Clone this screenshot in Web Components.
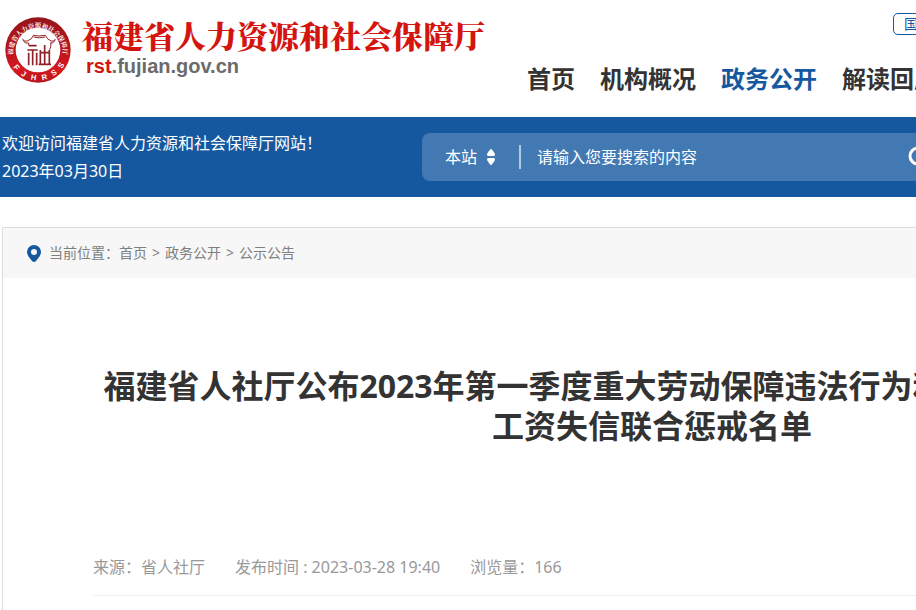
<!DOCTYPE html>
<html lang="zh-CN">
<head>
<meta charset="utf-8">
<title>福建省人力资源和社会保障厅</title>
<style>
  body {
    margin: 0;
    background: #fff;
    color: #333;
    font-family: "Noto Sans", "Noto Sans CJK SC", sans-serif;
    font-size: 16px;
    line-height: 28px;
  }
</style>
</head>
<body>
<site-page>
  <site-header slot="header">
    <nav-item href="#">首页</nav-item>
    <nav-item href="#">机构概况</nav-item>
    <nav-item href="#" active>政务公开</nav-item>
    <nav-item href="#">解读回应</nav-item>
  </site-header>
  <welcome-bar slot="header" date="2023年03月30日">欢迎访问福建省人力资源和社会保障厅网站！</welcome-bar>
  <article-panel>
    <crumb-trail slot="crumbs" items="首页,政务公开,公示公告"></crumb-trail>
    <span slot="title">福建省人社厅公布2023年第一季度重大劳动保障违法行为和第一批拖欠农民工<br>工资失信联合惩戒名单</span>
    <span slot="meta">来源：省人社厅</span>
    <span slot="meta">发布时间 : 2023-03-28 19:40</span>
    <span slot="meta">浏览量：166</span>
  </article-panel>
</site-page>

<script>
class SitePage extends HTMLElement {
  constructor() {
    super();
    this.attachShadow({ mode: "open" });
    this.shadowRoot.innerHTML = `
      <style>
        :host { display: block; overflow: hidden; }
        .wide { min-width: 1304px; }
        main { max-width: 1300px; margin: 30px auto 0; }
      </style>
      <div class="wide">
        <slot name="header"></slot>
        <main><slot></slot></main>
      </div>
    `;
  }
}

class SiteSeal extends HTMLElement {
  constructor() {
    super();
    this.attachShadow({ mode: "open" });
    // letters of the lower ring, with the angle of each one
    const ring = [["F", 51], ["J", 31], ["H", 9], ["R", -13], ["S", -35], ["S", -56]];
    const letters = ring
      .map(([c, a]) => `<text x="99" y="190" text-anchor="middle" transform="rotate(${a} 99 99)">${c}</text>`)
      .join("");
    this.shadowRoot.innerHTML = `
      <style>
        :host { display: block; flex: none; width: 66px; height: 66px; }
        svg { display: block; width: 100%; height: 100%; }
        .top { font: 700 19px "Noto Serif CJK SC", "Noto Sans CJK SC", serif; }
        .low { font: 700 23px "Liberation Sans", sans-serif; }
      </style>
      <svg viewBox="0 0 198 198" aria-hidden="true">
        <defs>
          <linearGradient id="red" x1="0" y1="0" x2="0" y2="1">
            <stop offset="0" stop-color="#96151b"/>
            <stop offset="0.45" stop-color="#b5151a"/>
            <stop offset="0.8" stop-color="#d51920"/>
            <stop offset="1" stop-color="#b5161b"/>
          </linearGradient>
          <path id="arc" d="M24 108A75 75 0 1 1 174 108"/>
        </defs>
        <circle cx="99" cy="99" r="98" fill="url(#red)"/>
        <circle cx="99" cy="99" r="67" fill="#fff"/>
        <g fill="#fff">
          <text class="top" text-anchor="middle"><textPath href="#arc" startOffset="50%">福建省人力资源和社会保障厅</textPath></text>
          <g class="low">${letters}</g>
        </g>
        <g fill="none" stroke="#8f2228" stroke-width="3">
          <path d="M52 65q5 11 15 7q15-5 18-17q15 4 36 0q5 13 18 17q10 3 12-6"/>
          <path d="M54 70q6 12 17 8M86 60q16 5 34 0M150 70q-5 11-15 8M71 78v8M138 78q0 12-4 20"/>
        </g>
        <g fill="none" stroke="#8f2228" stroke-width="5">
          <path d="M72 86h23M67 99h31M83 99v46M71 107v38M95 107v38"/>
          <path d="M106 99v43M133 99v43M119 84v58M101 142h37M106 107h27"/>
        </g>
      </svg>
    `;
  }
}

class NavItem extends HTMLElement {
  constructor() {
    super();
    this.attachShadow({ mode: "open" });
    this.shadowRoot.innerHTML = `
      <style>
        :host { display: block; flex: none; }
        a { color: #333; font-size: 24px; font-weight: 700; line-height: 36px; text-decoration: none; white-space: nowrap; }
        :host([active]) a, a:hover { color: #15589f; }
      </style>
      <a href="${this.getAttribute("href") || "#"}"><slot></slot></a>
    `;
  }
}

class SiteHeader extends HTMLElement {
  constructor() {
    super();
    this.attachShadow({ mode: "open" });
    this.shadowRoot.innerHTML = `
      <style>
        :host { display: block; }
        header { display: flex; min-height: 117px; box-sizing: border-box; padding-left: 5px; }
        .brand { display: flex; flex: none; gap: 11px; width: 522px; padding-top: 17px; box-sizing: border-box; text-decoration: none; }
        .name { color: #d4140f; font-size: 31px; font-weight: 900; line-height: 36px; white-space: nowrap; font-family: "Noto Serif CJK SC", "Noto Sans CJK SC", serif; }
        .domain { color: #6b6b6b; font: 700 20px/26px "Liberation Sans", sans-serif; padding-left: 4px; }
        .domain b { color: #d4140f; }
        .right { flex: 1; padding-top: 13px; }
        .links { display: flex; padding-left: 366px; }
        .links a { border: 1px solid #15589f; border-radius: 5px; color: #15589f; font-size: 14px; line-height: 20px; padding: 0 10px; text-decoration: none; white-space: nowrap; }
        nav { display: flex; gap: 25px; padding-top: 26px; }
      </style>
      <header>
        <a class="brand" href="#">
          <site-seal></site-seal>
          <div>
            <div class="name">福建省人力资源和社会保障厅</div>
            <div class="domain"><b>rst</b>.fujian.gov.cn</div>
          </div>
        </a>
        <div class="right">
          <div class="links"><a href="#">国务院网站</a></div>
          <nav><slot></slot></nav>
        </div>
      </header>
    `;
  }
}

class SearchBox extends HTMLElement {
  constructor() {
    super();
    this.attachShadow({ mode: "open" });
    this.shadowRoot.innerHTML = `
      <style>
        :host { display: block; }
        form { display: flex; align-items: center; height: 48px; border-radius: 8px; background: rgba(255, 255, 255, 0.2); padding-left: 23px; }
        select, input, button { font: inherit; color: #fff; background: none; border: 0; margin: 0; padding: 0; outline: 0; }
        select { appearance: none; width: 34px; height: 28px; }
        option { color: #333; }
        .arrows { width: 10px; height: 18px; margin: 0 23px 0 7px; fill: #fff; }
        .rule { width: 2px; height: 24px; background: #b5cae1; margin-right: 16px; }
        input { flex: 1; min-width: 0; height: 28px; }
        input::placeholder { color: #fff; opacity: 1; }
        button { width: 48px; height: 48px; }
        button svg { display: block; }
      </style>
      <form>
        <select id="scope" aria-label="搜索范围"><option>本站</option></select>
        <svg class="arrows" viewBox="0 0 10 18" aria-hidden="true"><path d="M5 1Q6 1 9 6Q9 8 8 8H2Q1 8 1 6Q4 1 5 1ZM5 17Q4 17 1 12Q1 10 2 10H8Q9 10 9 12Q6 17 5 17Z"/></svg>
        <span class="rule"></span>
        <input id="q" type="text" aria-label="搜索" placeholder="请输入您要搜索的内容">
        <button type="button" aria-label="搜索">
          <svg width="24" height="24" viewBox="0 0 24 24" fill="none" stroke="#fff" stroke-width="3"><circle cx="10" cy="11" r="8"/><path d="M16 17l6 6"/></svg>
        </button>
      </form>
    `;
  }
}

class WelcomeBar extends HTMLElement {
  constructor() {
    super();
    this.attachShadow({ mode: "open" });
    this.shadowRoot.innerHTML = `
      <style>
        :host { display: block; background: #15589f; color: #fff; }
        .row { display: grid; grid-template-columns: 420px minmax(0, 534px); align-items: center; padding: 12px 2px; }
        p { margin: 0; white-space: nowrap; }
      </style>
      <div class="row">
        <div>
          <p><slot></slot></p>
          <p>${this.getAttribute("date") || ""}</p>
        </div>
        <search-box></search-box>
      </div>
    `;
  }
}

class CrumbTrail extends HTMLElement {
  constructor() {
    super();
    this.attachShadow({ mode: "open" });
    const links = (this.getAttribute("items") || "")
      .split(",")
      .map((item) => `<a href="#">${item}</a>`)
      .join("<span>&gt;</span>");
    this.shadowRoot.innerHTML = `
      <style>
        :host { display: block; background: #f7f7f7; color: #808080; font-size: 14px; }
        nav { display: flex; align-items: center; padding: 11px 24px; }
        svg { width: 14px; height: 17px; margin-right: 8px; }
        a { color: inherit; text-decoration: none; }
        span { margin: 0 5px; }
      </style>
      <nav>
        <svg viewBox="0 0 14 17" aria-hidden="true"><path fill="#15589f" fill-rule="evenodd" d="M7 0a7 7 0 0 1 7 7c0 4-4 7-5 9q-2 2-4 0C4 14 0 11 0 7a7 7 0 0 1 7-7zm0 4a3 3 0 1 0 0 6 3 3 0 0 0 0-6z"/></svg>
        当前位置：${links}
      </nav>
    `;
  }
}

class ArticlePanel extends HTMLElement {
  constructor() {
    super();
    this.attachShadow({ mode: "open" });
    this.shadowRoot.innerHTML = `
      <style>
        :host { display: block; border: 1px solid #ddd; border-bottom: 0; }
        article { padding: 88px 90px 14px; }
        h1 { margin: 0; font-size: 32px; line-height: 40px; font-weight: 700; text-align: center; white-space: nowrap; }
        .meta { display: flex; gap: 30px; margin-top: 107px; padding-bottom: 14px; border-bottom: 1px solid #eee; color: #999; white-space: nowrap; }
      </style>
      <slot name="crumbs"></slot>
      <article>
        <h1><slot name="title"></slot></h1>
        <div class="meta"><slot name="meta"></slot></div>
      </article>
    `;
  }
}

customElements.define("site-page", SitePage);
customElements.define("site-seal", SiteSeal);
customElements.define("nav-item", NavItem);
customElements.define("site-header", SiteHeader);
customElements.define("search-box", SearchBox);
customElements.define("welcome-bar", WelcomeBar);
customElements.define("crumb-trail", CrumbTrail);
customElements.define("article-panel", ArticlePanel);
</script>
</body>
</html>
